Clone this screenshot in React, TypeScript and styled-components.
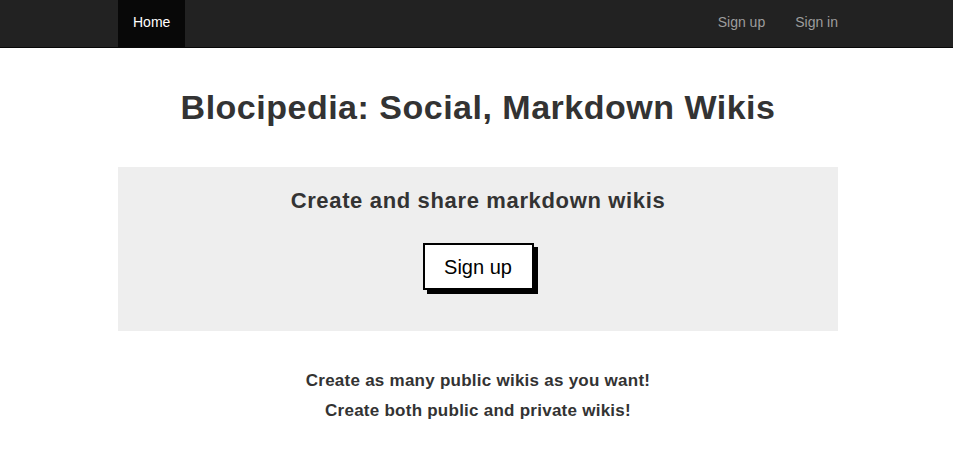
import React from "react";
import styled, { createGlobalStyle } from "styled-components";

const Global = createGlobalStyle`
  html, body { margin: 0; padding: 0; background: #fff; }
  body { font-family: "Liberation Sans", Arial, sans-serif; color: #333; font-size: 14px; line-height: 1.42857; }
  * { box-sizing: border-box; }
`;

const NavBar = styled.nav`
  background: #222;
  border-bottom: 1px solid #080808;
  height: 48px;
`;

const NavInner = styled.div`
  width: 735px;
  margin-left: 118px;
  display: flex;
  justify-content: space-between;
  height: 47px;
`;

const NavGroup = styled.div`
  display: flex;
  height: 100%;
`;

const NavLink = styled.a<{ $active?: boolean }>`
  display: block;
  padding: 12px 15px 0;
  height: 100%;
  font-size: 14px;
  line-height: 20px;
  text-decoration: none;
  color: ${(p) => (p.$active ? "#fff" : "#9d9d9d")};
  background: ${(p) => (p.$active ? "#080808" : "transparent")};
`;

const Main = styled.main`
  width: 720px;
  margin-left: 118px;
  text-align: center;
`;

const Title = styled.h1`
  font-size: 34px;
  font-weight: 700;
  letter-spacing: 0.5px;
  margin: 39px 0 40px;
  line-height: 40px;
  color: #333;
`;

const Jumbo = styled.section`
  background: #eee;
  height: 164px;
  padding-top: 21px;
  display: flex;
  flex-direction: column;
  align-items: center;
`;

const Sub = styled.h3`
  font-size: 22px;
  font-weight: 700;
  letter-spacing: 0.65px;
  margin: 0;
  line-height: 26px;
  color: #333;
`;

const CtaButton = styled.a`
  margin-top: 29px;
  display: inline-flex;
  align-items: center;
  justify-content: center;
  padding-top: 1px;
  width: 111px;
  height: 47px;
  border: 2px solid #000;
  background: #fff;
  box-shadow: 4px 4px 0 #000;
  color: #000;
  font-size: 20px;
  text-decoration: none;
`;

const Features = styled.div`
  margin-top: 35px;
  display: flex;
  flex-direction: column;
  align-items: center;
`;

const Feature = styled.p`
  margin: 0;
  font-size: 17px;
  font-weight: 700;
  letter-spacing: 0.25px;
  line-height: 30px;
  color: #333;
`;

export default function App() {
  return (
    <>
      <Global />
      <NavBar>
        <NavInner>
          <NavGroup>
            <NavLink href="#" $active>Home</NavLink>
          </NavGroup>
          <NavGroup>
            <NavLink href="#">Sign up</NavLink>
            <NavLink href="#">Sign in</NavLink>
          </NavGroup>
        </NavInner>
      </NavBar>
      <Main>
        <Title>Blocipedia: Social, Markdown Wikis</Title>
        <Jumbo>
          <Sub>Create and share markdown wikis</Sub>
          <CtaButton href="#">Sign up</CtaButton>
        </Jumbo>
        <Features>
          <Feature>Create as many public wikis as you want!</Feature>
          <Feature>Create both public and private wikis!</Feature>
        </Features>
      </Main>
    </>
  );
}
